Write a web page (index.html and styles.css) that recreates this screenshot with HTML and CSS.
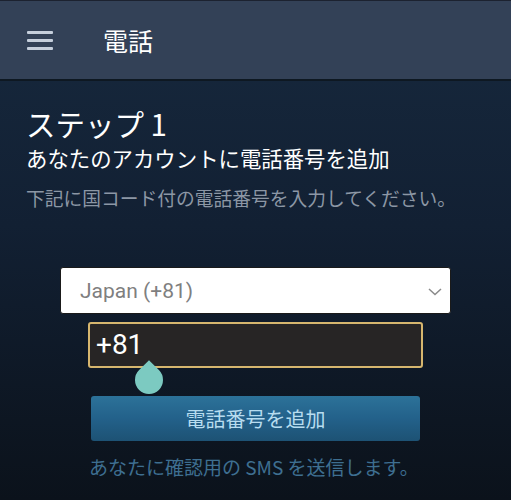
FILE: index.html
```html
<!DOCTYPE html>
<html lang="ja">
<head>
    <meta charset="UTF-8">
    <meta name="viewport" content="width=device-width, initial-scale=1.0">
    <title>電話</title>
    <link rel="stylesheet" href="styles.css">
</head>
<body>
    <div class="topbar">
        <div class="menu-icon">
            <span></span><span></span><span></span>
        </div>
        <div class="topbar-title">電話</div>
    </div>

    <div class="page">
        <h1 class="step">ステップ 1</h1>
        <h2 class="subtitle">あなたのアカウントに電話番号を追加</h2>
        <p class="desc">下記に国コード付の電話番号を入力してください。</p>

        <div class="form">
            <div class="select">
                <span>Japan (+81)</span>
                <svg class="chevron" width="14" height="8" viewBox="0 0 14 8">
                    <path d="M1 1 L7 6.5 L13 1" fill="none" stroke="#8a8a8a" stroke-width="1.5"/>
                </svg>
            </div>
            <div class="phone-wrap">
                <div class="phone-input">+81</div>
                <div class="handle"></div>
            </div>
            <button class="add-btn">電話番号を追加</button>
            <p class="note">あなたに確認用の SMS を送信します。</p>
        </div>
    </div>
</body>
</html>
```

FILE: styles.css
```css
body {
    margin: 0;
    height: 500px;
    overflow: hidden;
    font-family: "Noto Sans CJK JP", "Noto Sans", sans-serif;
    background: linear-gradient(to bottom, #17293e 0%, #122033 45%, #0b121b 100%);
    color: #fff;
}

.topbar {
    height: 78px;
    background: #334157;
    border-top: 1px solid #1c2230;
    border-bottom: 2px solid #0e1822;
    display: flex;
    align-items: center;
}

.menu-icon {
    width: 26px;
    margin-left: 27px;
    display: flex;
    flex-direction: column;
    gap: 5px;
}

.menu-icon span {
    display: block;
    height: 3px;
    background: #c6cfdc;
    border-radius: 1px;
}

.topbar-title {
    margin-left: 50px;
    font-size: 25px;
    color: #fff;
}

.page {
    padding: 23px 0 0 26px;
}

.step {
    margin: 0;
    font-size: 29.5px;
    font-weight: normal;
    line-height: 38px;
}

.subtitle {
    margin: 0;
    font-size: 21.4px;
    font-weight: normal;
    line-height: 32px;
}

.desc {
    margin: 10px 0 0;
    font-size: 18.75px;
    line-height: 28px;
    color: #8c97a5;
}

.form {
    margin-top: 55px;
    display: flex;
    flex-direction: column;
    align-items: flex-start;
}

.select {
    margin-left: 34px;
    width: 391px;
    height: 47px;
    flex-shrink: 0;
    box-sizing: border-box;
    background: #fff;
    border-radius: 3px;
    border: 1px solid #1a1a1a;
    display: flex;
    align-items: center;
    justify-content: space-between;
    padding: 0 8px 0 19px;
    font-family: Roboto, "Noto Sans", sans-serif;
    font-size: 21px;
    color: #7f7f7f;
}

.chevron {
    margin-top: 2px;
}

.phone-wrap {
    position: relative;
    margin: 8px 0 0 62px;
}

.phone-input {
    width: 335px;
    height: 46px;
    box-sizing: border-box;
    background: #272525;
    border: 2px solid #d6b66e;
    border-radius: 3px;
    padding-left: 6px;
    font-family: Roboto, "Noto Sans", sans-serif;
    font-size: 28px;
    line-height: 42px;
    color: #fff;
}

.handle {
    position: absolute;
    left: 47px;
    top: 44px;
    width: 28px;
    height: 28px;
    background: #7ccac1;
    border-radius: 0 50% 50% 50%;
    transform: rotate(45deg);
}

.add-btn {
    margin: 28px 0 0 65px;
    width: 329px;
    height: 45px;
    flex-shrink: 0;
    border: none;
    border-radius: 3px;
    background: linear-gradient(to bottom, #2c7299 0%, #23618a 50%, #1d5274 100%);
    color: #b7dcef;
    font-family: "Noto Sans CJK JP", sans-serif;
    font-size: 20px;
}

.note {
    margin: 13px 0 0 63px;
    font-size: 19px;
    line-height: 26px;
    color: #3e6f91;
}
```
